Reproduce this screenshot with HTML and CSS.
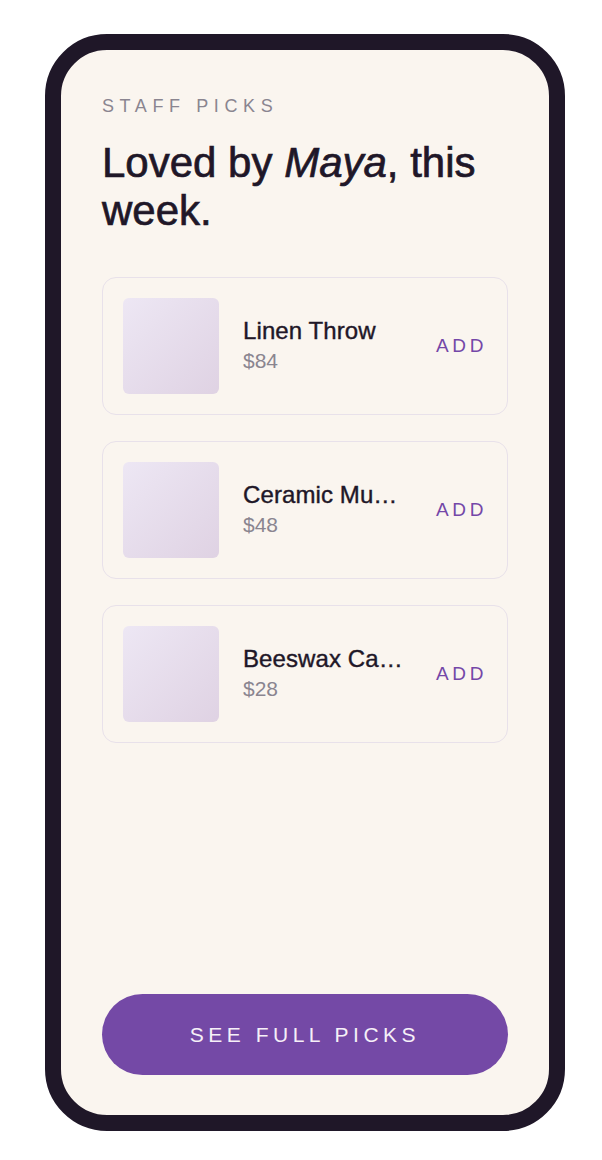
FILE: index.html
```html
<!DOCTYPE html>
<html>
<head>
<meta charset="utf-8">
<link rel="stylesheet" href="styles.css">
</head>
<body>
<div class="phone">
  <div class="screen">
    <div class="eyebrow">STAFF PICKS</div>
    <h1 class="title">Loved by <em>Maya</em>, this week.</h1>
    <div class="list">
      <div class="card">
        <div class="thumb"></div>
        <div class="info">
          <div class="name">Linen Throw</div>
          <div class="price">$84</div>
        </div>
        <div class="add">ADD</div>
      </div>
      <div class="card">
        <div class="thumb"></div>
        <div class="info">
          <div class="name">Ceramic Mug Set</div>
          <div class="price">$48</div>
        </div>
        <div class="add">ADD</div>
      </div>
      <div class="card">
        <div class="thumb"></div>
        <div class="info">
          <div class="name">Beeswax Candle</div>
          <div class="price">$28</div>
        </div>
        <div class="add">ADD</div>
      </div>
    </div>
    <div class="spacer"></div>
    <button class="cta">SEE FULL PICKS</button>
  </div>
</div>
</body>
</html>
```
FILE: styles.css
```css
html, body {
  margin: 0;
  padding: 0;
  background: #ffffff;
}
body {
  padding: 34px 0 0 45px;
  font-family: "Liberation Sans", Arial, sans-serif;
}
.phone {
  width: 520px;
  height: 1097px;
  box-sizing: border-box;
  border: 16px solid #1f1728;
  border-radius: 62px;
  background: #faf5ef;
  overflow: hidden;
}
.screen {
  height: 100%;
  box-sizing: border-box;
  padding: 46px 41px 40px 41px;
  display: flex;
  flex-direction: column;
}
.eyebrow {
  font-size: 18px;
  line-height: 1.2;
  letter-spacing: 5.6px;
  color: #8a8590;
}
.title {
  margin: 21px 0 0 0;
  font-family: "Liberation Sans", Arial, sans-serif;
  font-weight: 400;
  font-size: 42px;
  line-height: 48px;
  color: #1f1728;
  letter-spacing: 0;
  -webkit-text-stroke: 0.7px #1f1728;
}
.title em {
  font-style: italic;
}
.list {
  margin-top: 42px;
  display: flex;
  flex-direction: column;
  gap: 26px;
}
.card {
  display: flex;
  align-items: center;
  padding: 20px;
  border: 1.5px solid #e8e1ea;
  border-radius: 14px;
}
.thumb {
  flex: none;
  width: 96px;
  height: 96px;
  border-radius: 6px;
  background: linear-gradient(135deg, #ede7f4 0%, #dfd2e3 100%);
}
.info {
  flex: 1;
  min-width: 0;
  margin-left: 24px;
  margin-right: 32px;
}
.name {
  font-family: "Liberation Sans", Arial, sans-serif;
  font-weight: 400;
  font-size: 24px;
  line-height: 30px;
  letter-spacing: 0.1px;
  color: #1f1728;
  -webkit-text-stroke: 0.4px #1f1728;
  white-space: nowrap;
  overflow: hidden;
  text-overflow: ellipsis;
}
.price {
  font-size: 21px;
  line-height: 30px;
  color: #8a8590;
}
.add {
  flex: none;
  font-size: 19px;
  letter-spacing: 3.6px;
  color: #7447a8;
}
.spacer {
  flex: 1;
}
.cta {
  display: block;
  width: 100%;
  height: 81px;
  border: none;
  border-radius: 41px;
  background: #7449a6;
  color: #f6f0f8;
  font-family: "Liberation Sans", Arial, sans-serif;
  font-size: 21px;
  letter-spacing: 4.5px;
  padding: 0;
  cursor: pointer;
}
```
